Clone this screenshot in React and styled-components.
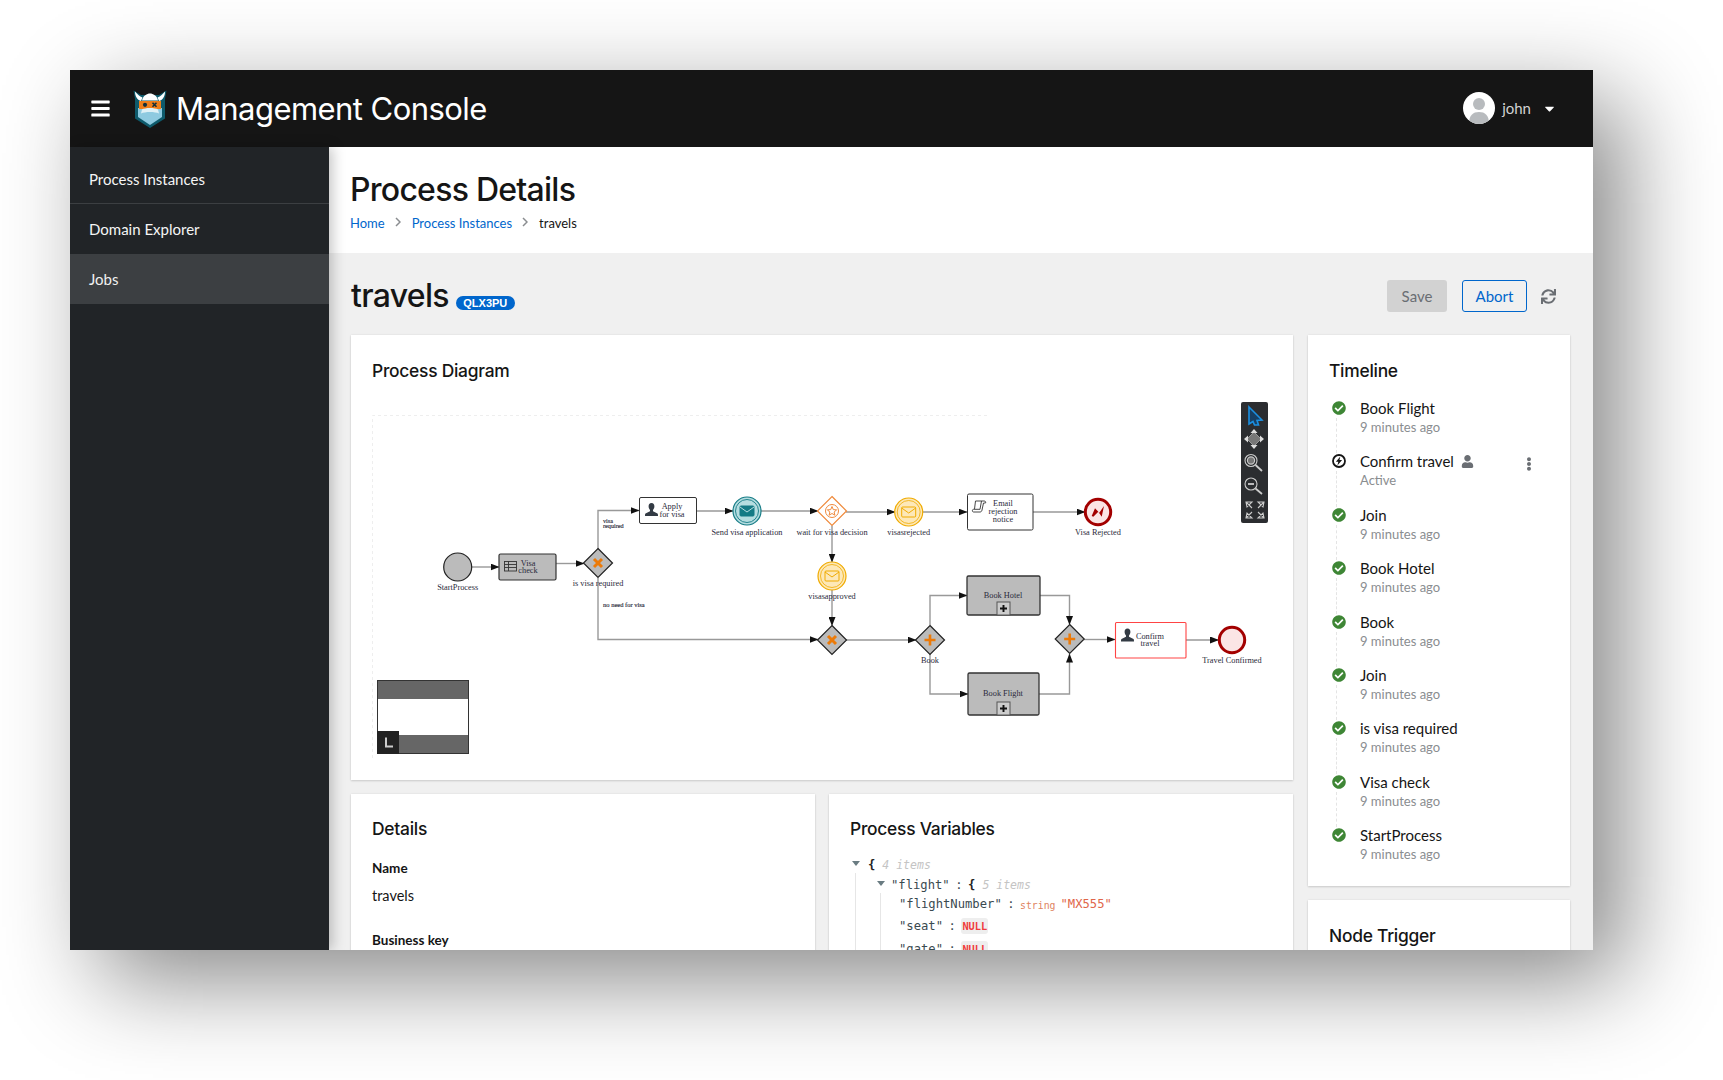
import React from "react";
import styled, { createGlobalStyle } from "styled-components";
import { FaBars, FaCaretDown, FaCheckCircle, FaEllipsisV, FaSync, FaUser } from "react-icons/fa";

const GlobalStyle = createGlobalStyle`
  html, body {
    margin: 0;
    padding: 0;
    background: #fff;
    overflow: hidden;
  }
  body {
    font-family: "Lato", "Open Sans", sans-serif;
    color: #151515;
  }
`;

const Page = styled.div`
  width: 1723px;
  height: 1080px;
  padding: 70px 130px 130px 70px;
  box-sizing: border-box;
`;

const Window = styled.div`
  width: 1523px;
  height: 880px;
  display: flex;
  flex-direction: column;
  overflow: hidden;
  box-shadow: 30px 30px 90px rgba(0, 0, 0, 0.47);
`;

const Header = styled.header`
  height: 77px;
  flex: none;
  background: #151515;
  display: flex;
  align-items: center;
  color: #fff;
  padding: 0 36px 0 20px;
`;

const MenuButton = styled.div`
  display: flex;
  font-size: 21px;
  width: 43px;
`;

const Title = styled.div`
  font-family: "Inter", sans-serif;
  font-size: 31px;
  letter-spacing: -0.55px;
  margin-left: 9px;
`;

const UserMenu = styled.div`
  margin-left: auto;
  display: flex;
  align-items: center;
  color: #d2d2d2;
  font-size: 15px;
  gap: 7px;
  padding-bottom: 1px;
`;

const Caret = styled.span`
  display: flex;
  color: #fff;
  font-size: 15px;
  margin-left: 4px;
`;

const Body = styled.div`
  flex: 1;
  display: flex;
  min-height: 0;
`;

const Sidebar = styled.nav`
  width: 259px;
  flex: none;
  background: #212427;
  padding-top: 8px;
  box-shadow: 4px 0 12px rgba(3, 3, 3, 0.22);
  position: relative;
  z-index: 2;
`;

const NavItem = styled.div`
  height: ${(p) => (p.$divided ? 49 : 50)}px;
  box-sizing: border-box;
  display: flex;
  align-items: center;
  padding: 0 0 1px 19px;
  font-size: 15px;
  color: ${(p) => (p.$active ? "#f0f0f0" : "#f5f5f5")};
  background: ${(p) => (p.$active ? "#3c3f42" : "transparent")};
  border-bottom: ${(p) => (p.$divided ? "1px solid #3c3f42" : "none")};
`;

const Main = styled.main`
  flex: 1;
  min-width: 0;
  background: #f0f0f0;
  overflow: hidden;
`;

const PageHead = styled.section`
  height: 106px;
  background: #fff;
  padding: 24px 22px 0 21px;
  box-sizing: border-box;
`;

const H1 = styled.h1`
  margin: 0;
  font-family: "Inter", sans-serif;
  font-weight: 500;
  font-size: 32px;
  line-height: 38px;
  letter-spacing: -0.75px;
  color: #151515;
`;

const Breadcrumb = styled.div`
  display: flex;
  align-items: center;
  margin-top: 5px;
  font-size: 13px;
  line-height: 18px;
`;

const Crumb = styled.span`
  color: ${(p) => (p.$link ? "#06c" : "#151515")};
`;

const Chevron = styled.svg`
  width: 6px;
  height: 10px;
  margin: 0 11px 2px 10px;
`;

const Content = styled.section`
  padding: 27px 23px 0 22px;
`;

const TitleRow = styled.div`
  height: 32px;
  display: flex;
  align-items: center;
  margin-bottom: 23px;
`;

const InstanceName = styled.div`
  font-family: "Inter", sans-serif;
  font-weight: 500;
  font-size: 32px;
  letter-spacing: -0.7px;
  padding-bottom: 2px;
`;

const Badge = styled.span`
  font-family: "Liberation Sans", sans-serif;
  font-weight: 700;
  font-size: 11px;
  line-height: 14px;
  height: 14px;
  width: 59px;
  text-align: center;
  border-radius: 7px;
  background: #06c;
  color: #fff;
  margin: 14px 0 0 7px;
`;

const Actions = styled.div`
  margin-left: auto;
  display: flex;
  align-items: center;
  gap: 15px;
`;

const Button = styled.div`
  height: 32px;
  box-sizing: border-box;
  display: flex;
  align-items: center;
  justify-content: center;
  width: ${(p) => p.$w}px;
  border-radius: 3px;
  font-size: 15px;
  color: ${(p) => (p.$primary ? "#06c" : "#6a6e73")};
  background: ${(p) => (p.$primary ? "transparent" : "#d2d2d2")};
  border: ${(p) => (p.$primary ? "1px solid #06c" : "none")};
`;

const Refresh = styled.span`
  display: flex;
  color: #6a6e73;
  font-size: 15px;
  margin: 0 14px 0 -1px;
`;

const Columns = styled.div`
  display: grid;
  grid-template-columns: 942px 262px;
  column-gap: 15px;
`;

const LeftColumn = styled.div`
  display: grid;
  grid-template-columns: 464px 464px;
  grid-template-rows: 445px 300px;
  gap: 14px;
  align-content: start;
`;

const RightColumn = styled.div`
  display: flex;
  flex-direction: column;
  gap: 14px;
`;

const Card = styled.div`
  background: #fff;
  box-shadow: 0 1px 2px rgba(3, 3, 3, 0.14), 0 0 2px rgba(3, 3, 3, 0.08);
  padding: ${(p) => p.$top || 24}px 21px 0;
  box-sizing: border-box;
  height: ${(p) => (p.$h ? `${p.$h}px` : "auto")};
  grid-column: ${(p) => (p.$wide ? "1 / 3" : "auto")};
`;

const CardTitle = styled.h2`
  margin: 0;
  font-family: "Inter", sans-serif;
  font-weight: 500;
  font-size: 17.4px;
  line-height: 24px;
  letter-spacing: -0.25px;
  color: #151515;
`;

const DiagramArea = styled.div`
  position: relative;
  width: 900px;
  height: 370px;
  margin-top: 17px;
`;

const DiagramSvg = styled.svg`
  display: block;
  width: 900px;
  height: 370px;
`;

const Toolbar = styled.svg`
  position: absolute;
  left: 869px;
  top: 2px;
  width: 27px;
  height: 121px;
`;

const Navigator = styled.div`
  position: absolute;
  left: 5px;
  top: 280px;
  width: 92px;
  height: 74px;
  box-sizing: border-box;
  border: 1px solid #333;
  background: linear-gradient(#666 0 18px, #fff 18px 54px, #666 54px);
`;

const NavToggle = styled.svg`
  position: absolute;
  left: -1px;
  bottom: -1px;
  width: 22px;
  height: 23px;
`;

const FieldLabel = styled.div`
  font-size: 13.5px;
  font-weight: 700;
  line-height: 18px;
  margin-top: ${(p) => p.$top}px;
`;

const FieldValue = styled.div`
  font-size: 14.5px;
  line-height: 18px;
  margin-top: 10px;
`;

const Json = styled.div`
  font-family: "DejaVu Sans Mono", monospace;
  font-size: 12.2px;
  color: #3a4a50;
  margin-top: 14px;
  position: relative;
`;

const JsonRow = styled.div`
  height: ${(p) => p.$h}px;
  display: flex;
  align-items: center;
  padding-left: ${(p) => p.$indent}px;
  white-space: pre;
`;

const Guide = styled.div`
  position: absolute;
  left: ${(p) => p.$left}px;
  top: ${(p) => p.$top}px;
  bottom: -40px;
  border-left: 1px solid #e6e6e6;
`;

const JsonCaret = styled.span`
  width: 0;
  height: 0;
  border-left: 4px solid transparent;
  border-right: 4px solid transparent;
  border-top: 5px solid #6a7c82;
  margin: 0 ${(p) => p.$gap}px 3px 0;
`;

const Colon = styled.span`
  margin: 0 5.5px;
`;

const Brace = styled.b`
  color: #222;
`;

const Count = styled.i`
  font-size: 11.5px;
  color: #c4c4c4;
  margin-left: 7px;
`;

const TypeTag = styled.span`
  font-size: 9.8px;
  color: #e0835f;
  margin: 2px 5px 0 0;
`;

const StringValue = styled.span`
  color: #e0664a;
`;

const NullTag = styled.b`
  font-size: 10.3px;
  background: #eee;
  color: #f03c3c;
  border-radius: 3px;
  padding: 2px 1px;
`;

const Timeline = styled.ul`
  list-style: none;
  margin: 15px 0 0;
  padding: 0;
`;

const TimelineItem = styled.li`
  position: relative;
  height: 53.4px;
  padding-left: 31px;
  &:not(:last-child)::before {
    content: "";
    position: absolute;
    left: 7px;
    top: 20px;
    bottom: -2px;
    border-left: 1px dashed #e4e4e4;
  }
`;

const StepIcon = styled.span`
  position: absolute;
  left: 3px;
  top: 3px;
  display: flex;
  font-size: 14px;
  color: #3e8635;
`;

const StepName = styled.div`
  font-size: 15px;
  line-height: 20px;
  display: flex;
  align-items: center;
  gap: 7px;
  color: #151515;
`;

const StepTime = styled.div`
  font-size: 13px;
  line-height: 17px;
  margin-top: 1px;
  color: #8a8d90;
`;

const AssignIcon = styled.span`
  display: flex;
  color: #6a6e73;
  font-size: 13px;
`;

const Kebab = styled.span`
  position: absolute;
  right: 13px;
  top: 6px;
  display: flex;
  color: #6a6e73;
  font-size: 14px;
`;

const steps = [
  ["Book Flight", "9 minutes ago"],
  ["Confirm travel", "Active", true],
  ["Join", "9 minutes ago"],
  ["Book Hotel", "9 minutes ago"],
  ["Book", "9 minutes ago"],
  ["Join", "9 minutes ago"],
  ["is visa required", "9 minutes ago"],
  ["Visa check", "9 minutes ago"],
  ["StartProcess", "9 minutes ago"],
];

function Logo() {
  return (
    <svg width="34" height="38" viewBox="0 0 34 38">
      <path d="M0.5 0.5 L8 5 H26 L33.5 0.5 L32 9 V28.5 L17 38 L2 28.5 V9 Z" fill="#0e5a6b" />
      <path d="M5 18 H29 V27 L17 35 L5 27 Z" fill="#8ecae0" />
      <path d="M6 11 H28 V19 H6 Z" fill="#ef7f1a" />
      <circle cx="12" cy="14.8" r="2.1" fill="#13303a" />
      <path d="M19.5 12.8 L23.5 16.8 M23.5 12.8 L19.5 16.8" stroke="#13303a" strokeWidth="1.6" />
      <path d="M9 19.5 C12 17.5 22 17.5 25 19.5 L26 23.5 C22 21.5 12 21.5 8 23.5 Z" fill="#dff1f6" />
      <path d="M9 10.5 C10 5.5 14 3.5 17 3.5 C20 3.5 24 5.5 25 10.5 Z" fill="#fff" />
      <path d="M2 1.5 C2 6 4 10 8 11 L9.5 7.5 C6.5 6.5 4 4 2 1.5 Z M32 1.5 C32 6 30 10 26 11 L24.5 7.5 C27.5 6.5 30 4 32 1.5 Z" fill="#fff" />
    </svg>
  );
}

function Avatar() {
  return (
    <svg width="32" height="32" viewBox="0 0 32 32">
      <defs>
        <clipPath id="avatar-clip">
          <circle cx="16" cy="16" r="16" />
        </clipPath>
      </defs>
      <circle cx="16" cy="16" r="16" fill="#fff" />
      <g clipPath="url(#avatar-clip)" fill="#b8bbbe">
        <circle cx="16" cy="12" r="6" />
        <path d="M6 32 C6 23 10 20 16 20 C22 20 26 23 26 32 Z" />
      </g>
    </svg>
  );
}

function BoltCircle() {
  return (
    <svg width="14" height="14" viewBox="0 0 14 14">
      <circle cx="7" cy="7" r="6" fill="#fff" stroke="#151515" strokeWidth="1.8" />
      <path d="M8.3 2.4 L3.9 7.8 H6.3 L5.4 11.6 L10.1 6 H7.5 Z" fill="#151515" />
    </svg>
  );
}

function Flow({ d }) {
  return <path d={d} fill="none" stroke="#999" strokeWidth="1.4" markerEnd="url(#bpmn-arrow)" />;
}

function Label({ x, y, children, size = 8.3, anchor = "middle", thick }) {
  return (
    <text
      x={x}
      y={y + 0.8}
      fontSize={size}
      textAnchor={anchor}
      dominantBaseline="middle"
      fill="#2a2a3a"
      stroke={thick ? "#2a2a3a" : "none"}
      strokeWidth={thick ? 0.15 : 0}
      fontFamily="'Liberation Serif', serif"
    >
      {children}
    </text>
  );
}

function Gateway({ cx, cy, kind, fill = "#bbb", stroke = "#222" }) {
  return (
    <g>
      <path d={`M${cx} ${cy - 14.5} L${cx + 14.5} ${cy} L${cx} ${cy + 14.5} L${cx - 14.5} ${cy} Z`} fill={fill} stroke={stroke} strokeWidth="1.2" />
      {kind === "x" && <path d={`M${cx - 4} ${cy - 4} L${cx + 4} ${cy + 4} M${cx + 4} ${cy - 4} L${cx - 4} ${cy + 4}`} stroke="#ec7a08" strokeWidth="3" />}
      {kind === "plus" && <path d={`M${cx - 5.5} ${cy} H${cx + 5.5} M${cx} ${cy - 5.5} V${cy + 5.5}`} stroke="#ec7a08" strokeWidth="2.6" />}
    </g>
  );
}

function Envelope({ x, y, w, h, fill, stroke }) {
  return (
    <g>
      <rect x={x} y={y} width={w} height={h} rx="1" fill={fill} stroke={stroke} strokeWidth="1" />
      <path d={`M${x} ${y + 1} L${x + w / 2} ${y + h / 2 + 1} L${x + w} ${y + 1}`} fill="none" stroke={fill === "none" ? stroke : "#b5dde0"} strokeWidth="1" />
    </g>
  );
}

function MessageEvent({ cx, cy }) {
  return (
    <g>
      <circle cx={cx} cy={cy} r="14" fill="#fde8b8" stroke="#f0ab00" strokeWidth="1.2" />
      <circle cx={cx} cy={cy} r="11.5" fill="none" stroke="#f0ab00" strokeWidth="0.8" />
      <Envelope x={cx - 7} y={cy - 5} w={14} h={10} fill="none" stroke="#f0ab00" />
    </g>
  );
}

function Person({ x, y, s = 1 }) {
  return (
    <path
      transform={`translate(${x} ${y}) scale(${s})`}
      d="M6.5 0 C4.5 0 3.6 1.5 3.6 3.3 C3.6 5 4.2 6 5 7 L5 8.2 L0.5 10.4 C0 10.8 0 12 0 13 H13 C13 12 13 10.8 12.5 10.4 L8 8.2 L8 7 C8.8 6 9.4 5 9.4 3.3 C9.4 1.5 8.5 0 6.5 0 Z"
      fill="#333b44"
    />
  );
}

function SubProcess({ x, y, w, h, name, textY, plusY }) {
  const plusX = 997;
  return (
    <g>
      <rect x={x} y={y} width={w} height={h} rx="1.5" fill="#bbb" stroke="#333" strokeWidth="1.3" />
      <Label x={1003} y={textY}>{name}</Label>
      <rect x={plusX} y={plusY} width="13" height="13" fill="#ccc" stroke="#555" strokeWidth="1" />
      <path d={`M${plusX + 3} ${plusY + 6.5} H${plusX + 10} M${plusX + 6.5} ${plusY + 3} V${plusY + 10}`} stroke="#111" strokeWidth="1.9" />
    </g>
  );
}

function ProcessDiagram() {
  return (
    <DiagramSvg viewBox="372 400 900 370">
      <defs>
        <marker id="bpmn-arrow" markerUnits="userSpaceOnUse" markerWidth="9" markerHeight="7" refX="8.5" refY="3.5" orient="auto">
          <path d="M0 0 L9 3.5 L0 7 Z" fill="#111" />
        </marker>
      </defs>
      <path d="M372.5 758 V415.5 H990" fill="none" stroke="#eee" strokeWidth="1" strokeDasharray="3 3" />

      <Flow d="M472 567 H499" />
      <Flow d="M556 563.5 H584" />
      <Flow d="M598 549 V510.5 H639" />
      <Flow d="M598 578 V639.5 H818" />
      <Flow d="M696 511 H733" />
      <Flow d="M761 511 H818" />
      <Flow d="M846 512 H895" />
      <Flow d="M923 512 H967" />
      <Flow d="M1033 512 H1085" />
      <Flow d="M832 525.5 V562" />
      <Flow d="M832 590 V625.5" />
      <Flow d="M846 640 H916" />
      <Flow d="M930 625 V595.5 H967" />
      <Flow d="M930 654 V694 H968" />
      <Flow d="M1040 595.5 H1069.5 V624.5" />
      <Flow d="M1039 694 H1069.5 V654" />
      <Flow d="M1084 639.5 H1115" />
      <Flow d="M1186 640 H1218.5" />

      <circle cx="457.7" cy="567" r="14" fill="#bbb" stroke="#222" strokeWidth="1.2" />
      <Label x={457.7} y={587}>StartProcess</Label>

      <rect x="499" y="554" width="57" height="26" rx="1.5" fill="#bbb" stroke="#333" strokeWidth="1.2" />
      <g fill="none" stroke="#333" strokeWidth="0.9">
        <rect x="504.5" y="561.5" width="12" height="9.5" />
        <path d="M504.5 564.5 H516.5 M504.5 567.5 H516.5 M508.5 561.5 V571" />
      </g>
      <Label x={528} y={563}>Visa</Label>
      <Label x={528} y={570}>check</Label>

      <Gateway cx={598} cy={563} kind="x" />
      <Label x={598} y={583}>is visa required</Label>
      <Label x={603} y={520.5} size={6.2} anchor="start" thick>visa</Label>
      <Label x={603} y={525.5} size={6.2} anchor="start" thick>required</Label>
      <Label x={603} y={604.5} size={6.5} anchor="start" thick>no need for visa</Label>

      <rect x="639.5" y="497.5" width="57" height="26" rx="1.5" fill="#fff" stroke="#333" strokeWidth="1" />
      <Person x={645} y={503} />
      <Label x={672} y={506}>Apply</Label>
      <Label x={672} y={514}>for visa</Label>

      <circle cx="747" cy="511" r="14" fill="#b5dde0" stroke="#147b85" strokeWidth="1.2" />
      <circle cx="747" cy="511" r="11.5" fill="none" stroke="#147b85" strokeWidth="0.9" />
      <Envelope x={740} y={506} w={14} h={10} fill="#147b85" stroke="#147b85" />
      <Label x={747} y={532}>Send visa application</Label>

      <Gateway cx={832} cy={511} fill="#fff" stroke="#ef8a3c" />
      <circle cx="832" cy="511" r="6.5" fill="#fff" stroke="#ef8a3c" strokeWidth="1" />
      <path d="M832 506.5 L833.3 509.6 L836.6 509.9 L834.1 512 L834.9 515.2 L832 513.5 L829.1 515.2 L829.9 512 L827.4 509.9 L830.7 509.6 Z" fill="none" stroke="#ef8a3c" strokeWidth="1" />
      <Label x={832} y={532}>wait for visa decision</Label>

      <MessageEvent cx={908.7} cy={512} />
      <Label x={908.7} y={532}>visasrejected</Label>

      <rect x="967.5" y="494" width="65.5" height="36" rx="1.5" fill="#fff" stroke="#333" strokeWidth="1" />
      <g fill="none" stroke="#333" strokeWidth="0.9">
        <path d="M975.5 501 H984 C985.5 501 986 502 985.5 503 H983.5 L982 510 C981.8 511.3 981 512 980 512 H973.5 C972 512 972 509.3 973.5 509.3 H980 L981.5 501" />
        <path d="M975.5 501 L974.5 509" />
      </g>
      <Label x={1003} y={503}>Email</Label>
      <Label x={1003} y={511}>rejection</Label>
      <Label x={1003} y={519}>notice</Label>

      <circle cx="1098" cy="512" r="12.7" fill="#fbe5e5" stroke="#a30000" strokeWidth="3" />
      <path d="M1091.7 516 L1095 508.3 L1099.3 512.7 L1104 506 L1101.7 516.7 L1098.3 511.7 L1093.3 516.7 Z" fill="#a30000" />
      <Label x={1098} y={532}>Visa Rejected</Label>

      <MessageEvent cx={832} cy={576} />
      <Label x={832} y={596}>visasapproved</Label>

      <Gateway cx={832} cy={640} kind="x" />
      <Gateway cx={930} cy={640} kind="plus" />
      <Label x={930} y={660}>Book</Label>

      <SubProcess x={967} y={576} w={73} h={39} name="Book Hotel" textY={595} plusY={602} />
      <SubProcess x={968} y={673} w={71} h={42} name="Book Flight" textY={693} plusY={702} />

      <Gateway cx={1069.7} cy={639} kind="plus" />

      <rect x="1115.5" y="622.5" width="70.5" height="35.5" rx="1" fill="#fff" stroke="#f44" strokeWidth="1.1" />
      <Person x={1121} y={628.5} />
      <Label x={1150} y={636}>Confirm</Label>
      <Label x={1150} y={643}>travel</Label>

      <circle cx="1232" cy="640" r="12.7" fill="#fbe5e5" stroke="#a30000" strokeWidth="3" />
      <Label x={1232} y={660}>Travel Confirmed</Label>
    </DiagramSvg>
  );
}

function DiagramTools() {
  return (
    <Toolbar viewBox="0 0 27 121">
      <rect width="27" height="121" rx="2" fill="#2b2d30" />
      <path d="M8 5 L21 18 L16 18.5 L17.5 23 L13.5 23 L12 19.5 L8 22 Z" fill="#173f63" stroke="#1b8fe0" strokeWidth="1.6" />
      <g transform="translate(13 37)">
        <path d="M0 -7 L7 0 L0 7 L-7 0 Z" fill="#777" stroke="#999" strokeWidth="1" />
        <path d="M0 -10 L3.5 -6 H-3.5 Z M0 10 L3.5 6 H-3.5 Z M-10 0 L-6 -3.5 V3.5 Z M10 0 L6 -3.5 V3.5 Z" fill="#ddd" />
      </g>
      <g fill="none" stroke="#ccc" strokeWidth="1.1">
        <circle cx="10" cy="58.5" r="6" />
        <circle cx="10" cy="58.5" r="3.6" fill="#777" />
        <path d="M14.5 63 L21 69" strokeWidth="1.8" />
        <circle cx="10" cy="82" r="6" />
        <path d="M7 82 H13" strokeWidth="1.8" />
        <path d="M14.5 86.5 L21 92" strokeWidth="1.8" />
        <path d="M5 100 H11 L6 105 Z M5 100 L11 106 M23 100 H17 L22 105 Z M23 100 L17 106" />
        <path d="M5 116 H11 L6 111 Z M5 116 L11 110 M23 116 H17 L22 111 Z M23 116 L17 110" />
      </g>
    </Toolbar>
  );
}

export default function App() {
  return (
    <Page>
      <GlobalStyle />
      <Window>
        <Header>
          <MenuButton>
            <FaBars />
          </MenuButton>
          <Logo />
          <Title>Management Console</Title>
          <UserMenu>
            <Avatar />
            <span>john</span>
            <Caret>
              <FaCaretDown />
            </Caret>
          </UserMenu>
        </Header>
        <Body>
          <Sidebar>
            <NavItem $divided>Process Instances</NavItem>
            <NavItem>Domain Explorer</NavItem>
            <NavItem $active>Jobs</NavItem>
          </Sidebar>
          <Main>
            <PageHead>
              <H1>Process Details</H1>
              <Breadcrumb>
                <Crumb $link>Home</Crumb>
                <Chevron viewBox="0 0 6 10">
                  <path d="M1 1 L5 5 L1 9" fill="none" stroke="#8a8d90" strokeWidth="1.5" />
                </Chevron>
                <Crumb $link>Process Instances</Crumb>
                <Chevron viewBox="0 0 6 10">
                  <path d="M1 1 L5 5 L1 9" fill="none" stroke="#8a8d90" strokeWidth="1.5" />
                </Chevron>
                <Crumb>travels</Crumb>
              </Breadcrumb>
            </PageHead>
            <Content>
              <TitleRow>
                <InstanceName>travels</InstanceName>
                <Badge>QLX3PU</Badge>
                <Actions>
                  <Button $w={60}>Save</Button>
                  <Button $w={65} $primary>Abort</Button>
                  <Refresh>
                    <FaSync />
                  </Refresh>
                </Actions>
              </TitleRow>
              <Columns>
                <LeftColumn>
                  <Card $wide>
                    <CardTitle>Process Diagram</CardTitle>
                    <DiagramArea>
                      <ProcessDiagram />
                      <DiagramTools />
                      <Navigator>
                        <NavToggle viewBox="0 0 22 23">
                          <rect width="22" height="23" fill="#222" />
                          <path d="M9 6.5 V15.5 H16" fill="none" stroke="#ccc" strokeWidth="2" />
                        </NavToggle>
                      </Navigator>
                    </DiagramArea>
                  </Card>
                  <Card $top={23}>
                    <CardTitle>Details</CardTitle>
                    <FieldLabel $top={18}>Name</FieldLabel>
                    <FieldValue>travels</FieldValue>
                    <FieldLabel $top={26}>Business key</FieldLabel>
                  </Card>
                  <Card $top={23}>
                    <CardTitle>Process Variables</CardTitle>
                    <Json>
                      <Guide $left={5} $top={18} />
                      <Guide $left={30} $top={38} />
                      <JsonRow $h={20} $indent={2}>
                        <JsonCaret $gap={8} />
                        <Brace>{"{"}</Brace>
                        <Count>4 items</Count>
                      </JsonRow>
                      <JsonRow $h={19} $indent={27}>
                        <JsonCaret $gap={6} />
                        {'"flight"'}
                        <Colon>:</Colon>
                        <Brace>{"{"}</Brace>
                        <Count>5 items</Count>
                      </JsonRow>
                      <JsonRow $h={20} $indent={49}>
                        {'"flightNumber"'}
                        <Colon>:</Colon>
                        <TypeTag>string</TypeTag>
                        <StringValue>"MX555"</StringValue>
                      </JsonRow>
                      <JsonRow $h={24} $indent={49}>
                        {'"seat"'}
                        <Colon>:</Colon>
                        <NullTag>NULL</NullTag>
                      </JsonRow>
                      <JsonRow $h={21} $indent={49}>
                        {'"gate"'}
                        <Colon>:</Colon>
                        <NullTag>NULL</NullTag>
                      </JsonRow>
                    </Json>
                  </Card>
                </LeftColumn>
                <RightColumn>
                  <Card $h={551}>
                    <CardTitle>Timeline</CardTitle>
                    <Timeline>
                      {steps.map(([name, time, active], i) => (
                        <TimelineItem key={i}>
                          <StepIcon>{active ? <BoltCircle /> : <FaCheckCircle />}</StepIcon>
                          <StepName>
                            {name}
                            {active && (
                              <AssignIcon>
                                <FaUser />
                              </AssignIcon>
                            )}
                          </StepName>
                          <StepTime>{time}</StepTime>
                          {active && (
                            <Kebab>
                              <FaEllipsisV />
                            </Kebab>
                          )}
                        </TimelineItem>
                      ))}
                    </Timeline>
                  </Card>
                  <Card $h={120}>
                    <CardTitle>Node Trigger</CardTitle>
                  </Card>
                </RightColumn>
              </Columns>
            </Content>
          </Main>
        </Body>
      </Window>
    </Page>
  );
}
